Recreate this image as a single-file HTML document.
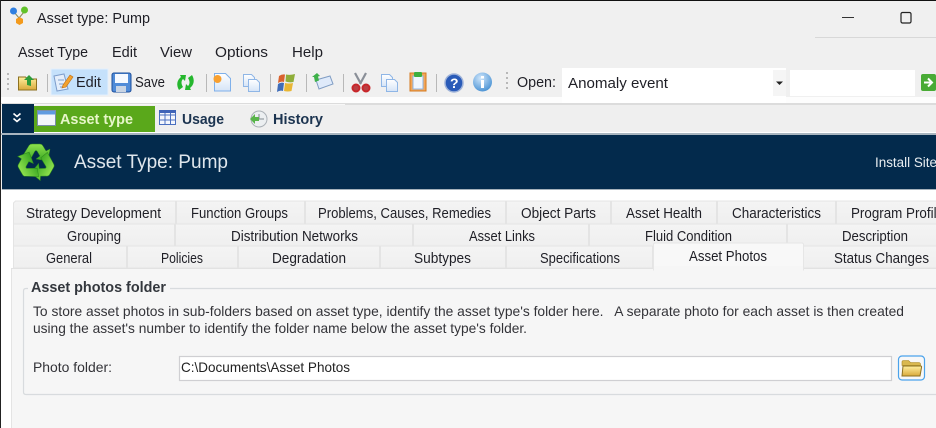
<!DOCTYPE html>
<html><head><meta charset="utf-8"><style>
html,body{margin:0;padding:0;width:936px;height:428px;overflow:hidden;background:#f0f0f0}
svg{display:block}
text{font-family:"Liberation Sans",sans-serif;font-size:14.5px;fill:#1f1f26}
</style></head><body>
<svg width="936" height="428" viewBox="0 0 936 428" xmlns="http://www.w3.org/2000/svg">
<defs>
<linearGradient id="fold" x1="0" y1="0" x2="0" y2="1"><stop offset="0" stop-color="#fff0a0"/><stop offset="1" stop-color="#d9a93a"/></linearGradient>
<linearGradient id="doc" x1="0" y1="0" x2="0" y2="1"><stop offset="0" stop-color="#fff"/><stop offset="1" stop-color="#d5e4f7"/></linearGradient>
<linearGradient id="tab" x1="0" y1="0" x2="0" y2="1"><stop offset="0" stop-color="#f4f4f4"/><stop offset="1" stop-color="#efefef"/></linearGradient>
<linearGradient id="rec" x1="0" y1="0" x2="0" y2="1"><stop offset="0" stop-color="#8fe04e"/><stop offset="1" stop-color="#3aa822"/></linearGradient>
<radialGradient id="blue" cx=".4" cy=".3" r=".8"><stop offset="0" stop-color="#cfe6fb"/><stop offset="1" stop-color="#3d8ad0"/></radialGradient>
<g id="copy"><path d="M1.500 1.500h8l3 3v9h-11z" fill="url(#doc)" stroke="#8fb6e6"/><path d="M6.500 6.500h8l3 3v9h-11z" fill="url(#doc)" stroke="#8fb6e6"/></g>
<path id="rarrow" d="M-14 -5L-7 -16.500Q-6 -18 -4 -18L4 -18Q6 -18 7 -16L10 -11L14 -13L12 -1L0 -3L4 -6L1 -11Q0 -12 -1 -11L-6 -2Z"/>
</defs>

<rect width="936" height="428" fill="#f0f0f0"/>
<rect width="936" height="1" fill="#111"/>
<rect width="1" height="428" fill="#222"/>

<!-- Title bar -->
<path d="M14 12L19 18M24 12L19 18" stroke="#8a8a5a" stroke-width="1"/>
<circle cx="13.500" cy="11" r="3.500" fill="#2f7fe0"/><circle cx="24.500" cy="10" r="3.500" fill="#62c22a"/>
<path d="M19.500 17l3.500 2v4l-3.500 2-3.500-2v-4z" fill="#f39a1c"/>
<text x="37" y="23" textLength="113" lengthAdjust="spacingAndGlyphs">Asset type: Pump</text>
<rect x="842" y="17" width="12" height="1" fill="#333"/>
<rect x="901" y="12.500" width="10" height="10.500" rx="1.500" fill="none" stroke="#222" stroke-width="1.200"/>
<rect x="815" y="37" width="121" height="1" fill="#d8d8d8"/>

<!-- Menu -->
<text x="18" y="57" textLength="70" lengthAdjust="spacingAndGlyphs">Asset Type</text>
<text x="112" y="57" textLength="25" lengthAdjust="spacingAndGlyphs">Edit</text>
<text x="160" y="57" textLength="32" lengthAdjust="spacingAndGlyphs">View</text>
<text x="215" y="57" textLength="53" lengthAdjust="spacingAndGlyphs">Options</text>
<text x="292" y="57" textLength="31" lengthAdjust="spacingAndGlyphs">Help</text>

<!-- Toolbar -->
<rect x="1" y="97" width="935" height="6" fill="#fdfdfd"/>
<rect x="1" y="103" width="935" height="2" fill="#dcdcdc"/>
<g fill="#b8b8b8">
<rect x="7" y="73" width="2" height="2"/><rect x="7" y="78" width="2" height="2"/><rect x="7" y="83" width="2" height="2"/><rect x="7" y="88" width="2" height="2"/>
<rect x="506" y="72" width="2" height="2"/><rect x="506" y="77" width="2" height="2"/><rect x="506" y="82" width="2" height="2"/><rect x="506" y="87" width="2" height="2"/>
<rect x="47" y="74" width="1" height="18"/><rect x="206" y="74" width="1" height="18"/><rect x="270" y="74" width="1" height="18"/><rect x="306" y="74" width="1" height="18"/><rect x="343" y="74" width="1" height="18"/><rect x="436" y="74" width="1" height="18"/>
</g>
<!-- open folder -->
<path d="M18.500 77h7l2 2h9v11h-18z" fill="url(#fold)" stroke="#8d7120"/>
<path d="M27 85v-5h-3l5-5 5 5h-3v6z" fill="#2e9c3a"/>
<!-- Edit button -->
<rect x="51" y="69" width="57" height="26" fill="#c5e1fb" stroke="#e3f0fd"/>
<path d="M54 76l10-2 4 15-11 2z" fill="#e4eefb" stroke="#7d9dcb"/>
<path d="M58 80h6M59 84h6M60 87h5" stroke="#7d9dcb"/>
<path d="M63 85l7-10 3 2-7 10-4 1z" fill="#f2a22e" stroke="#bd6b12" stroke-width=".6"/>
<text x="76" y="87" textLength="25" lengthAdjust="spacingAndGlyphs">Edit</text>
<!-- Save -->
<rect x="112" y="73" width="19" height="19" rx="2" fill="#4f8bd8" stroke="#1e4f9c"/>
<rect x="115" y="74" width="13" height="9" fill="#f5f9ff"/>
<rect x="116" y="86" width="10" height="6" fill="#c8d4e4"/>
<text x="135" y="87" textLength="30" lengthAdjust="spacingAndGlyphs">Save</text>
<!-- refresh -->
<path d="M179 90c-3-5-2-10 2-13l-1-2 6 0-1 6-2-2c-2 2-2 5 0 8z" fill="#25b72e"/>
<path d="M192 75c3 5 2 10-2 13l1 2-6 0 1-6 2 2c2-2 2-5 0-8z" fill="#25b72e"/>
<!-- new doc -->
<path d="M214.500 73.500h11l5 5v12.500h-16z" fill="url(#doc)" stroke="#7fb0ea"/>
<circle cx="217.500" cy="79" r="4" fill="#f8a030"/>
<!-- copy 1 -->
<use href="#copy" x="242" y="73"/>
<!-- windows flag -->
<path d="M279 76q3-2 6-1.500l-1 7.500q-3-1-6 1z" fill="#d9622e"/>
<path d="M286 74.500q4 1 9-.5l-1.500 8q-4 1-8-.5z" fill="#8fae3a"/>
<path d="M278 84q3-2 6-1l-1 8q-3-1-6 1z" fill="#3f6cb8"/>
<path d="M285 83q4 1 8 0l-1.500 8q-4 1-7.500 0z" fill="#e8b634"/>
<!-- mail swap -->
<path d="M316 80l14-4 3 8-14 5z" fill="#dfeafa" stroke="#7f9cc3"/>
<path d="M315 82l-1-5h-2l5-4 3 3-2 .5 1 4z" fill="#3eb14a"/>
<!-- scissors -->
<path d="M355 73l6 11M366 73l-6 11" stroke="#8a8f98" stroke-width="2.200"/>
<circle cx="356" cy="88" r="3.500" fill="#b84044" stroke="#c8262a" stroke-width="2"/>
<circle cx="366" cy="88" r="3.500" fill="#b84044" stroke="#c8262a" stroke-width="2"/>
<!-- copy 2 -->
<use href="#copy" x="380" y="73"/>
<!-- paste -->
<rect x="410" y="73" width="16" height="18" fill="#f2a65a" stroke="#d47a20"/>
<rect x="413" y="76" width="10" height="13" fill="#f0f6ff" stroke="#8fb6e6"/>
<rect x="414" y="72" width="8" height="5" rx="1" fill="#3fae3f"/>
<!-- help -->
<circle cx="454" cy="83" r="9" fill="#2a5bb8" stroke="#9fb3d9" stroke-width="1.500"/>
<text x="450" y="88" style="fill:#fff;font-size:14px;font-weight:bold">?</text>
<!-- info -->
<circle cx="482.500" cy="82" r="9.500" fill="url(#blue)"/>
<rect x="481" y="80" width="3" height="8" fill="#fff"/><rect x="481" y="76" width="3" height="2.500" fill="#fff"/>

<text x="517" y="87" textLength="39" lengthAdjust="spacingAndGlyphs">Open:</text>
<rect x="562" y="68" width="224" height="35" fill="#fff"/>
<rect x="773" y="70" width="13" height="26" fill="#f5f5f5"/>
<path d="M776 81.500h7l-3.500 3.500z" fill="#222"/>
<text x="568" y="88" textLength="100" lengthAdjust="spacingAndGlyphs">Anomaly event</text>
<rect x="790" y="70" width="125" height="26" fill="#fff"/>
<rect x="921" y="74" width="15" height="17" rx="2" fill="#49ab35"/>
<path d="M924 82.500h7M928 78.500l4 4-4 4" stroke="#fff" stroke-width="2" fill="none"/>

<!-- Nav strip -->
<rect x="1" y="105" width="935" height="27" fill="#efefef"/>
<rect x="1" y="104" width="344" height="1" fill="#f7f7f7"/>
<rect x="1" y="132" width="935" height="1" fill="#fff"/>
<rect x="1" y="133" width="935" height="2" fill="#a9b5bf"/>
<rect x="2" y="104" width="32" height="29" fill="#032a4c"/>
<path d="M13.500 113.500l3.500 3 3.500-3M13.500 118.500l3.500 3 3.500-3" stroke="#fff" stroke-width="1.600" fill="none"/>
<rect x="34" y="106" width="121" height="26" fill="#5aa81b"/>
<rect x="37.500" y="110.500" width="18" height="15" fill="#f3f6fb" stroke="#7a8ea8"/>
<rect x="38" y="111" width="17" height="3.500" fill="#5f9be0"/>
<text x="60" y="124" textLength="73" lengthAdjust="spacingAndGlyphs" style="fill:#e7f6c9;font-weight:bold">Asset type</text>
<g stroke="#4a6fc0" fill="#f4f7fd"><rect x="159.500" y="110.500" width="16" height="14"/><path d="M159.500 115h16M159.500 120h16M165 110.500v14M170.500 110.500v14" fill="none"/></g>
<rect x="159" y="110" width="17" height="3" fill="#3f64b8"/>
<text x="182" y="124" textLength="42" lengthAdjust="spacingAndGlyphs" style="font-weight:bold;fill:#1c3450">Usage</text>
<circle cx="259" cy="119" r="8" fill="#eceff1" stroke="#aab0b6"/>
<path d="M259 114v5h5" stroke="#808890" fill="none"/>
<path d="M250 119l5-5v3h4v4h-4v3z" fill="#59b44a"/>
<text x="273" y="124" textLength="50" lengthAdjust="spacingAndGlyphs" style="font-weight:bold;fill:#1c3450">History</text>

<!-- Header -->
<rect x="2" y="135" width="934" height="54" fill="#032a4c"/>
<rect x="2" y="189" width="934" height="1" fill="#a5b1bb"/>
<g transform="translate(36 162)" fill="url(#rec)" stroke="#2c8a1c" stroke-width=".5">
<use href="#rarrow"/>
<use href="#rarrow" transform="rotate(120)"/>
<use href="#rarrow" transform="rotate(240)"/>
</g>
<text x="74" y="168" textLength="154" lengthAdjust="spacingAndGlyphs" style="fill:#dfe6ec;font-size:19px">Asset Type: Pump</text>
<text x="875" y="167" textLength="62" lengthAdjust="spacingAndGlyphs" style="fill:#e8edf1;font-size:13.500px">Install Site</text>

<!-- page background -->
<rect x="1" y="190" width="935" height="238" fill="#fff"/>

<!-- Tabs -->
<g fill="url(#tab)" stroke="#e4e4e4">
<path d="M13.500 224v-21l2-2h160v23z"/><path d="M176.500 224v-23h128v23z"/><path d="M305.500 224v-23h200v23z"/><path d="M506.500 224v-23h104v23z"/><path d="M611.500 224v-23h105v23z"/><path d="M717.500 224v-23h118v23z"/><path d="M836.500 224v-23h100v23z"/>
<path d="M13.500 246v-22h161v22z"/><path d="M175.500 246v-22h237v22z"/><path d="M413.500 246v-22h175v22z"/><path d="M589.500 246v-22h197v22z"/><path d="M787.500 246v-22h149v22z"/>
<path d="M13.500 268v-22h113v22z"/><path d="M127.500 268v-22h110v22z"/><path d="M238.500 268v-22h141v22z"/><path d="M380.500 268v-22h125v22z"/><path d="M506.500 268v-22h146v22z"/><path d="M803.500 268v-22h133v22z"/>
</g>
<text x="26" y="218" textLength="135" lengthAdjust="spacingAndGlyphs">Strategy Development</text>
<text x="191" y="218" textLength="97" lengthAdjust="spacingAndGlyphs">Function Groups</text>
<text x="318" y="218" textLength="173" lengthAdjust="spacingAndGlyphs">Problems, Causes, Remedies</text>
<text x="521" y="218" textLength="75" lengthAdjust="spacingAndGlyphs">Object Parts</text>
<text x="626" y="218" textLength="76" lengthAdjust="spacingAndGlyphs">Asset Health</text>
<text x="732" y="218" textLength="89" lengthAdjust="spacingAndGlyphs">Characteristics</text>
<text x="851" y="218" textLength="93" lengthAdjust="spacingAndGlyphs">Program Profile</text>
<text x="67" y="241" textLength="54" lengthAdjust="spacingAndGlyphs">Grouping</text>
<text x="231" y="241" textLength="127" lengthAdjust="spacingAndGlyphs">Distribution Networks</text>
<text x="469" y="241" textLength="66" lengthAdjust="spacingAndGlyphs">Asset Links</text>
<text x="645" y="241" textLength="87" lengthAdjust="spacingAndGlyphs">Fluid Condition</text>
<text x="842" y="241" textLength="66" lengthAdjust="spacingAndGlyphs">Description</text>
<text x="46" y="263" textLength="46" lengthAdjust="spacingAndGlyphs">General</text>
<text x="161" y="263" textLength="42" lengthAdjust="spacingAndGlyphs">Policies</text>
<text x="272" y="263" textLength="74" lengthAdjust="spacingAndGlyphs">Degradation</text>
<text x="414" y="263" textLength="57" lengthAdjust="spacingAndGlyphs">Subtypes</text>
<text x="540" y="263" textLength="80" lengthAdjust="spacingAndGlyphs">Specifications</text>
<text x="834" y="263" textLength="95" lengthAdjust="spacingAndGlyphs">Status Changes</text>

<!-- Panel -->
<rect x="11" y="268" width="925" height="160" fill="#f6f6f6"/>
<rect x="11" y="268" width="1" height="160" fill="#e4e4e4"/>
<rect x="11" y="268" width="642" height="1" fill="#e2e2e2"/>
<rect x="803" y="268" width="133" height="1" fill="#e2e2e2"/>
<path d="M653.500 270v-26l1-1h148l1 1v26z" fill="#f8f8f8" stroke="#e6e6e6"/>
<rect x="654" y="266" width="149" height="6" fill="#f6f6f6"/>
<text x="689" y="261" textLength="78" lengthAdjust="spacingAndGlyphs">Asset Photos</text>

<!-- Group box -->
<path d="M936 288.500H26q-2.500 0-2.500 2.500v101q0 2.500 2.500 2.500h910" fill="none" stroke="#d8dbde" stroke-width="1.200"/>
<rect x="28" y="280" width="142" height="16" fill="#f6f6f6"/>
<text x="31" y="292" textLength="135" lengthAdjust="spacingAndGlyphs" style="font-weight:bold;fill:#33373d">Asset photos folder</text>
<text x="33" y="316" textLength="871" lengthAdjust="spacingAndGlyphs" style="fill:#333338;font-size:14px;white-space:pre">To store asset photos in sub-folders based on asset type, identify the asset type's folder here.   A separate photo for each asset is then created</text>
<text x="33" y="333" textLength="494" lengthAdjust="spacingAndGlyphs" style="fill:#333338;font-size:14px">using the asset's number to identify the folder name below the asset type's folder.</text>
<text x="33" y="372" textLength="79" lengthAdjust="spacingAndGlyphs" style="fill:#333338;font-size:14px">Photo folder:</text>
<rect x="179.500" y="356.500" width="712" height="24" fill="#fff" stroke="#cfcfd2" stroke-width="1.200"/>
<text x="181" y="372" textLength="169" lengthAdjust="spacingAndGlyphs" style="fill:#222;font-size:14px">C:\Documents\Asset Photos</text>
<rect x="898.500" y="356" width="26" height="24" rx="3.500" fill="#f8f8f8" stroke="#4ba3ec" stroke-width="1.200"/>
<path d="M902 362q0-1.500 1.500-1.500h5l2 2h8q2 0 2 2v1h-18.500z" fill="#d9b84f" stroke="#a88520" stroke-width=".6"/>
<path d="M902 376l1-10h17.500q1.500 0 1 1.500l-1.500 8.500z" fill="url(#fold)" stroke="#8d7120" stroke-width="1"/>
</svg>
</body></html>
